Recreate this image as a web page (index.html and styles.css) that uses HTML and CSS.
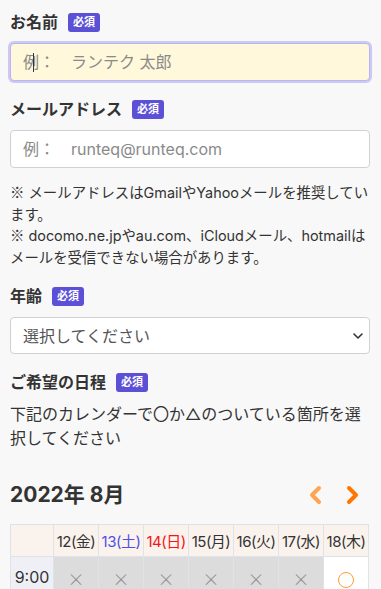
FILE: index.html
```html
<!DOCTYPE html>
<html lang="ja">
<head>
<meta charset="utf-8">
<title>フォーム</title>
<link rel="stylesheet" href="styles.css">
</head>
<body>
<form class="form">
  <div class="field">
    <div class="label"><span>お名前</span><span class="badge">必須</span></div>
    <div class="input-wrap">
      <input class="input input--focus" type="text" placeholder="例：　ランテク 太郎">
      <span class="caret"></span>
    </div>
  </div>

  <div class="field">
    <div class="label"><span>メールアドレス</span><span class="badge">必須</span></div>
    <input class="input" type="text" placeholder="例：　runteq@runteq.com">
    <p class="note"><span class="kome">※</span> メールアドレスはGmailやYahooメールを推奨しています。<br><span class="kome">※</span> docomo.ne.jpやau.com、iCloudメール、hotmailはメールを受信できない場合があります。</p>
  </div>

  <div class="field">
    <div class="label"><span>年齢</span><span class="badge">必須</span></div>
    <select class="select">
      <option>選択してください</option>
    </select>
  </div>

  <div class="field">
    <div class="label"><span>ご希望の日程</span><span class="badge">必須</span></div>
    <p class="desc">下記のカレンダーで〇か△のついている箇所を選択してください</p>
  </div>

  <div class="cal-head">
    <h2 class="month">2022年 8月</h2>
    <div class="nav">
      <svg class="arrow arrow--prev" width="14" height="20" viewBox="0 0 14 20"><path d="M11 3 L4 10 L11 17" fill="none" stroke="#ffa552" stroke-width="4" stroke-linecap="round" stroke-linejoin="round"/></svg>
      <svg class="arrow arrow--next" width="14" height="20" viewBox="0 0 14 20"><path d="M3 3 L10 10 L3 17" fill="none" stroke="#ff7700" stroke-width="4" stroke-linecap="round" stroke-linejoin="round"/></svg>
    </div>
  </div>

  <table class="cal">
    <colgroup><col class="col-time"><col><col><col><col><col><col><col></colgroup>
    <thead>
      <tr>
        <th></th>
        <th>12(金)</th>
        <th class="sat">13(土)</th>
        <th class="sun">14(日)</th>
        <th>15(月)</th>
        <th>16(火)</th>
        <th>17(水)</th>
        <th>18(木)</th>
      </tr>
    </thead>
    <tbody>
      <tr>
        <td class="time">9:00</td>
        <td class="ng">×</td>
        <td class="ng">×</td>
        <td class="ng">×</td>
        <td class="ng">×</td>
        <td class="ng">×</td>
        <td class="ng">×</td>
        <td class="ok"><span class="circle"></span></td>
      </tr>
    </tbody>
  </table>
</form>
</body>
</html>
```

FILE: styles.css
```css
* { box-sizing: border-box; }

html, body {
  margin: 0;
  padding: 0;
  background: #f8f8f8;
}

body {
  font-family: Inter, "Noto Sans CJK JP", sans-serif;
  color: #333;
}

.form {
  padding: 10px 11px 0 10px;
}

.field {
  display: flex;
  flex-direction: column;
}

.label {
  display: flex;
  align-items: center;
  gap: 10px;
  font-size: 16px;
  font-weight: 700;
  line-height: 24px;
  height: 24px;
  margin-bottom: 9px;
  color: #333;
}

.badge {
  display: inline-block;
  background: #5b50d6;
  color: #fff;
  font-size: 11px;
  font-weight: 700;
  line-height: 19px;
  height: 19px;
  padding: 0 5px;
  border-radius: 3px;
}

.input-wrap {
  position: relative;
}

.input {
  display: block;
  width: 100%;
  height: 38px;
  border: 1px solid #cfd1d6;
  border-radius: 4px;
  background: #fff;
  padding: 0 12px;
  font-family: inherit;
  font-size: 16px;
  color: #333;
  outline: none;
}

.input::placeholder {
  color: #8a8a8a;
}

.input--focus {
  background: #fff8db;
  border-color: #b9b4f2;
  box-shadow: 0 0 0 2px #cdc9f6;
}

.caret {
  position: absolute;
  left: 23px;
  top: 10px;
  width: 1px;
  height: 19px;
  background: #333;
}

.field + .field {
  margin-top: 16px;
}

.note {
  margin: 14px 0 0;
  font-size: 14.4px;
  line-height: 21.5px;
  color: #333;
}

.kome {
  font-family: "Noto Sans CJK JP", sans-serif;
  line-height: 1;
}

.select {
  display: block;
  width: 100%;
  height: 37px;
  border: 1px solid #cfd1d6;
  border-radius: 4px;
  background: #fff url("data:image/svg+xml,%3Csvg xmlns='http://www.w3.org/2000/svg' width='10' height='6' viewBox='0 0 10 6'%3E%3Cpath d='M1 1 L5 5 L9 1' fill='none' stroke='%23333' stroke-width='1.6' stroke-linecap='round' stroke-linejoin='round'/%3E%3C/svg%3E") no-repeat right 6px center;
  -webkit-appearance: none;
  appearance: none;
  padding: 0 12px;
  font-family: inherit;
  font-size: 16px;
  color: #555;
}

.desc {
  margin: -1px 0 0;
  font-size: 16px;
  line-height: 24px;
  color: #333;
}

.cal-head {
  display: flex;
  justify-content: space-between;
  align-items: center;
  margin-top: 25px;
  height: 40px;
}

.month {
  margin: 0;
  font-size: 21px;
  font-weight: 700;
  line-height: 40px;
  color: #333;
}

.nav {
  display: flex;
  gap: 24px;
  padding-right: 10px;
}

.arrow { display: block; }

.cal {
  margin-top: 9px;
  width: 359px;
  border-collapse: collapse;
  table-layout: fixed;
}

.col-time { width: 43px; }

.cal th,
.cal td {
  border: 1px solid #dfe2e8;
  text-align: center;
  padding: 0;
  font-weight: 400;
}

.cal th {
  height: 32px;
  background: #faf2ec;
  font-size: 15px;
  color: #333;
  white-space: nowrap;
  letter-spacing: -0.5px;
}

.cal th.sat { color: #4f4fe6; }
.cal th.sun { color: #f41515; }

.cal td {
  height: 44px;
  font-size: 16px;
}

.cal td.time {
  background: #eef0f6;
  color: #333;
  padding-bottom: 4px;
}

.cal td.ng {
  background: #dcdcdc;
  color: #888;
  font-family: "Noto Sans CJK JP", sans-serif;
  font-weight: 300;
  font-size: 17px;
}

.cal td.ok {
  background: #fff;
}

.circle {
  display: inline-block;
  width: 16px;
  height: 16px;
  border: 1.3px solid #ff9933;
  border-radius: 50%;
  vertical-align: middle;
}
```
